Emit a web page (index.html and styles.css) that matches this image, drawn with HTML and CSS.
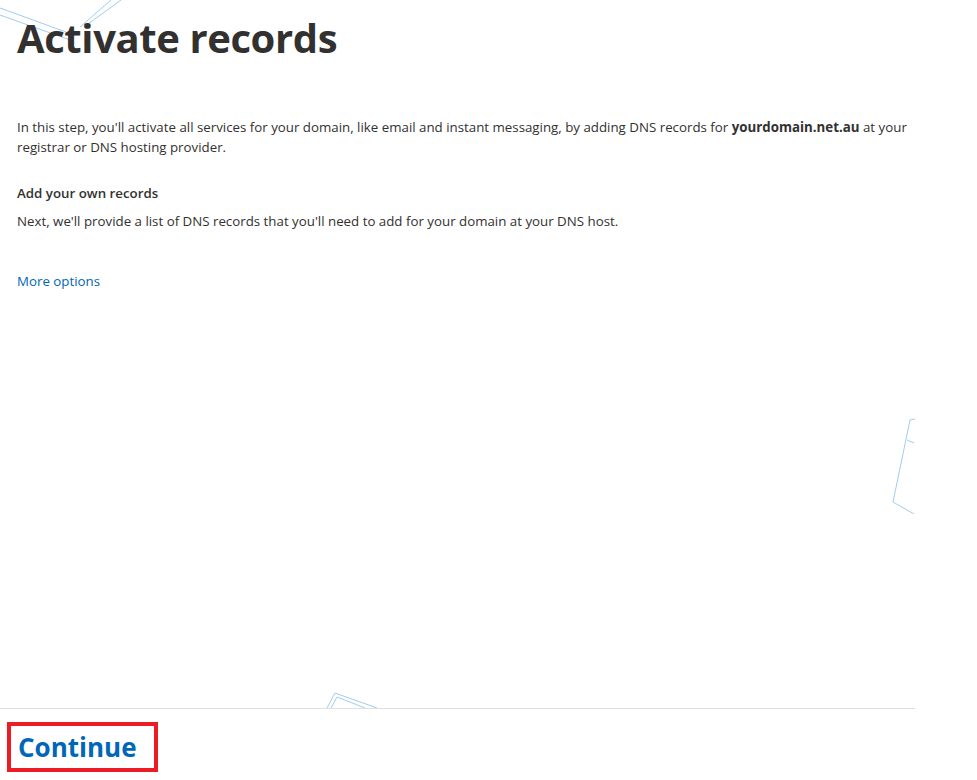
FILE: index.html
```html
<!DOCTYPE html>
<html lang="en">
<head>
<meta charset="utf-8">
<title>Activate records</title>
<link rel="stylesheet" href="styles.css">
</head>
<body>
<div class="page">
  <main class="main">
    <svg class="deco" width="915" height="708" viewBox="0 0 915 708" aria-hidden="true">
      <g fill="none" stroke="#9fcdf2" stroke-width="1">
        <polyline points="0,8 66,32"/>
        <polyline points="0,15 70,40"/>
        <polyline points="111,0 80,27"/>
        <polyline points="121,0 88,24"/>
        <polyline points="915,419 910,420 893,502 914,514"/>
        <polyline points="907,440 914,443"/>
        <polyline points="327,708 335,693 377,708"/>
        <polyline points="331,708 337,697 365,708"/>
      </g>
    </svg>
    <div class="content">
      <h1 class="title">Activate records</h1>
      <p class="text intro">In this step, you'll activate all services for your domain, like email and instant messaging, by adding DNS records for <strong>yourdomain.net.au</strong> at your registrar or DNS hosting provider.</p>
      <h2 class="subhead">Add your own records</h2>
      <p class="text">Next, we'll provide a list of DNS records that you'll need to add for your domain at your DNS host.</p>
      <a class="link" href="#">More options</a>
    </div>
  </main>
  <footer class="footer">
    <button class="continue" type="button">Continue</button>
  </footer>
</div>
</body>
</html>
```

FILE: styles.css
```css
html, body {
  margin: 0;
  padding: 0;
  background: #ffffff;
}
body {
  font-family: "Open Sans", "Noto Sans", "Liberation Sans", sans-serif;
  color: #323130;
}
.page {
  width: 915px;
}
.main {
  position: relative;
  height: 708px;
  overflow: hidden;
}
.deco {
  position: absolute;
  left: 0;
  top: 0;
  pointer-events: none;
}
.content {
  position: relative;
  padding: 0 6px 0 17px;
}
.title {
  margin: 0;
  padding-top: 10px;
  font-size: 40px;
  line-height: 56px;
  font-weight: 700;
  letter-spacing: -0.4px;
  color: #323130;
}
.text {
  margin: 0;
  font-size: 13.3px;
  line-height: 20px;
}
.intro {
  margin-top: 51px;
}
.text strong {
  font-weight: 700;
}
.subhead {
  margin: 26px 0 8px;
  font-size: 13.3px;
  line-height: 20px;
  font-weight: 600;
}
.link {
  display: inline-block;
  margin-top: 40px;
  font-size: 13.3px;
  line-height: 20px;
  color: #0067b8;
  text-decoration: none;
}
.footer {
  border-top: 1px solid #e1dfdd;
  padding: 13px 0 0 7px;
}
.continue {
  display: block;
  margin: 0;
  padding: 6px 17px 5px 7px;
  border: 4px solid #ed1c24;
  background: #ffffff;
  font-family: "Open Sans", "Noto Sans", sans-serif;
  font-size: 26px;
  line-height: 31px;
  font-weight: 700;
  color: #0067b8;
}
```
